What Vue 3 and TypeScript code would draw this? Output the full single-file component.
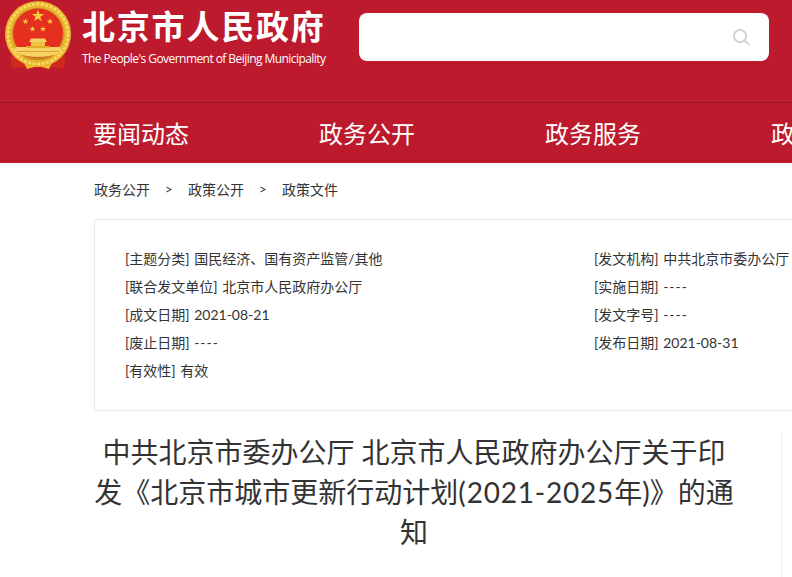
<template>
	<div class="page">
		<header class="header">
			<div class="header-top">
				<svg class="emblem" viewBox="0 0 76 72" width="76" height="72" aria-hidden="true">
					<!-- ribbons -->
					<path d="M13 50 Q9 58 13 68 L24 67 L30 60 L46 60 L52 67 L63 68 Q67 58 63 50 Z" fill="#cf2a1c" />
					<path d="M22 59 L27 69 L38 66 L49 69 L54 59 L38 63 Z" fill="#f0bb2c" />
					<path d="M33 60 H43 L41 67 H35 Z" fill="#d9301f" />
					<!-- wreath -->
					<circle cx="38" cy="34" r="33" fill="#eab62f" />
					<circle cx="38" cy="34" r="30" fill="none" stroke="#f8dc6a" stroke-width="2.500" stroke-dasharray="3 1.500" />
					<circle cx="38" cy="34" r="26.500" fill="#d9981f" />
					<circle cx="38" cy="33.500" r="25" fill="#e5301f" />
					<polygon v-for="star in stars" :key="star.x" :points="starPoints(star.x, star.y, star.r)" fill="#f5cf3e" />
					<!-- gate -->
					<path d="M29 42 L31 38.500 H45 L47 42 Z" fill="#f4d264" />
					<path d="M31 42 H45 V46 H31 Z" fill="#f0c345" />
					<path d="M16 47 H60 L63 52 Q38 62 13 52 Z" fill="#f4d264" />
					<path d="M26 46 H50 V48 H26 Z" fill="#e3ab2c" />
					<path d="M17 51 H59 V52 H17 Z" fill="#dfa22a" />
					<path d="M22 55 Q38 60 54 55 L50 58 Q38 62 26 58 Z" fill="#c98a1c" />
				</svg>
				<div class="brand">
					<h1 class="brand-name">北京市人民政府</h1>
					<p class="brand-sub">The People's Government of Beijing Municipality</p>
				</div>
				<div class="search">
					<svg viewBox="0 0 20 20" width="19" height="19" aria-hidden="true">
						<circle cx="8.500" cy="8.500" r="6.500" fill="none" stroke="#d2d2d2" stroke-width="2" />
						<path d="M13.500 13.500 L18 17.500" fill="none" stroke="#d2d2d2" stroke-width="2" stroke-linecap="round" />
					</svg>
				</div>
			</div>
			<nav class="nav">
				<a v-for="item in navItems" :key="item" class="nav-item">{{ item }}</a>
			</nav>
		</header>

		<main class="content">
			<div class="crumbs">
				<template v-for="(crumb, index) in crumbs" :key="crumb">
					<span v-if="index > 0" class="crumb-sep">&gt;</span>
					<span>{{ crumb }}</span>
				</template>
			</div>

			<section class="info">
				<ul class="info-col info-left">
					<li v-for="row in leftRows" :key="row.label" class="info-row">[{{ row.label }}] <span :class="{'is-empty': row.value === '----'}">{{ row.value }}</span></li>
				</ul>
				<ul class="info-col info-right">
					<li v-for="row in rightRows" :key="row.label" class="info-row">[{{ row.label }}] <span :class="{'is-empty': row.value === '----'}">{{ row.value }}</span></li>
				</ul>
			</section>

			<div class="article">
				<h2 class="title">中共北京市委办公厅 北京市人民政府办公厅关于印发《北京市城市更新行动计划<span class="title-years">(2021-2025</span>年)》的通知</h2>
				<aside class="side"></aside>
			</div>
		</main>
	</div>
</template>

<script setup lang="ts">
interface InfoRow {
	label: string;
	value: string;
}

const navItems: string[] = ["要闻动态", "政务公开", "政务服务", "政民互动"];
const crumbs: string[] = ["政务公开", "政策公开", "政策文件"];

const leftRows: InfoRow[] = [
	{label: "主题分类", value: "国民经济、国有资产监管/其他"},
	{label: "联合发文单位", value: "北京市人民政府办公厅"},
	{label: "成文日期", value: "2021-08-21"},
	{label: "废止日期", value: "----"},
	{label: "有效性", value: "有效"}
];

const rightRows: InfoRow[] = [
	{label: "发文机构", value: "中共北京市委办公厅"},
	{label: "实施日期", value: "----"},
	{label: "发文字号", value: "----"},
	{label: "发布日期", value: "2021-08-31"}
];

const stars = [
	{x: 38, y: 16, r: 6.500},
	{x: 25.500, y: 21.500, r: 3.200},
	{x: 50, y: 21.500, r: 3.200},
	{x: 32.500, y: 29, r: 3.200},
	{x: 43, y: 29, r: 3.200}
];

function starPoints(cx: number, cy: number, r: number): string {
	const points: string[] = [];
	for (let i = 0; i < 10; i++) {
		const radius = i % 2 === 0 ? r : r * 0.38;
		const angle = (Math.PI / 5) * i - Math.PI / 2;
		points.push(`${cx + radius * Math.cos(angle)},${cy + radius * Math.sin(angle)}`);
	}
	return points.join(" ");
}
</script>

<style>
html,
body {
	margin: 0;
	background: #fff;
	overflow: hidden;
}
</style>

<style scoped>
.page {
	width: 792px;
	height: 577px;
	overflow: hidden;
	font-family: Lato, "Noto Sans CJK SC", sans-serif;
	color: #333;
}

.header {
	background-color: #bd1a2d;
	height: 163px;
}

.header-top {
	display: flex;
	align-items: flex-start;
	height: 102px;
	border-bottom: 1px solid #8e1a26;
}

.emblem {
	flex: none;
}

.brand {
	flex: none;
	width: 277px;
	margin-left: 6px;
	color: #fff;
}

.brand-name {
	margin: 4px 0 0;
	font-size: 33px;
	line-height: 44px;
	font-weight: 700;
	letter-spacing: 1.800px;
	white-space: nowrap;
}

.brand-sub {
	margin: 2px 0 0;
	font-family: "Open Sans", sans-serif;
	font-size: 12px;
	line-height: 18px;
	letter-spacing: -0.560px;
	white-space: nowrap;
}

.search {
	flex: none;
	display: flex;
	align-items: center;
	justify-content: flex-end;
	box-sizing: border-box;
	width: 410px;
	height: 48px;
	margin-top: 13px;
	padding-right: 18px;
	background-color: #fff;
	border-radius: 8px;
}

.nav {
	display: flex;
	height: 60px;
	padding-left: 93px;
	overflow: hidden;
}

.nav-item {
	flex: none;
	width: 226px;
	font-size: 24px;
	line-height: 62px;
	color: #fff;
	white-space: nowrap;
}

.content {
	padding-left: 94px;
}

.crumbs {
	display: flex;
	align-items: center;
	gap: 15px;
	box-sizing: border-box;
	height: 56px;
	padding-bottom: 4px;
	font-size: 14px;
}

.crumb-sep {
	width: 8px;
	font-size: 13px;
}

.info {
	display: flex;
	box-sizing: border-box;
	width: 800px;
	height: 192px;
	padding: 25px 0 0 30px;
	border: 1px solid #ebebe4;
}

.info-col {
	flex: none;
	margin: 0;
	padding: 0;
	list-style: none;
}

.info-left {
	width: 469px;
}

.info-row {
	font-size: 14px;
	line-height: 28px;
	word-spacing: 1px;
	white-space: nowrap;
}

.is-empty {
	letter-spacing: 1px;
}

.article {
	display: flex;
	align-items: flex-start;
}

.title {
	flex: none;
	width: 640px;
	margin: 21px 0 0;
	font-size: 28px;
	line-height: 40px;
	font-weight: 400;
	text-align: center;
}

.title-years {
	letter-spacing: 0.800px;
}

.side {
	flex: none;
	width: 1px;
	height: 145px;
	margin: 21px 0 0 47px;
	background-color: #ededed;
}
</style>
